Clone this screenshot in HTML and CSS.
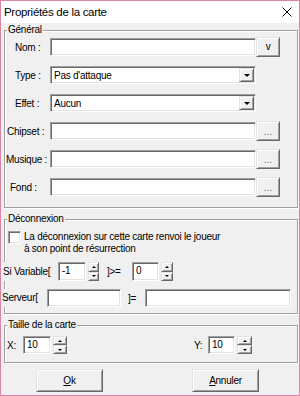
FILE: index.html
```html
<!DOCTYPE html>
<html lang="fr">
<head>
<meta charset="utf-8">
<title>Propriétés de la carte</title>
<link rel="stylesheet" href="styles.css">
</head>
<body>
<div class="window">
  <div class="titlebar">
    <span class="title">Propriétés de la carte</span>
    <svg class="close" width="10" height="10" viewBox="0 0 10 10"><path d="M0.5 0.5L9.5 9.5M9.5 0.5L0.5 9.5" stroke="#000" stroke-width="1" fill="none"/></svg>
  </div>
  <div class="client">
    <div class="group">
      <span class="legend">Général</span>
      <div class="rows">
        <div class="row"><span class="lbl p10">Nom :</span><span class="field w-main"></span><span class="btn sbtn">v</span></div>
        <div class="row"><span class="lbl p10">Type :</span><span class="field combo"><span class="ctext">Pas d'attaque</span><span class="btn dd"><i class="tri-down"></i></span></span></div>
        <div class="row"><span class="lbl p10">Effet :</span><span class="field combo"><span class="ctext">Aucun</span><span class="btn dd"><i class="tri-down"></i></span></span></div>
        <div class="row"><span class="lbl p2">Chipset :</span><span class="field w-main"></span><span class="btn sbtn dots">...</span></div>
        <div class="row"><span class="lbl p1">Musique :</span><span class="field w-main"></span><span class="btn sbtn dots">...</span></div>
        <div class="row"><span class="lbl p5">Fond :</span><span class="field w-main"></span><span class="btn sbtn dots">...</span></div>
      </div>
    </div>

    <div class="group gap-top">
      <span class="legend">Déconnexion</span>
      <div class="chkrow">
        <span class="chk"></span>
        <span class="chktext">La déconnexion sur cette carte renvoi le joueur<br>à son point de résurrection</span>
      </div>
      <div class="svrow">
        <span class="txt sv-lbl">Si Variable[</span>
        <span class="spin">
          <span class="field sp-in w28">-1</span>
          <span class="spbtns w11"><span class="btn spb"><i class="up"></i></span><span class="btn spb"><i class="down"></i></span></span>
        </span>
        <span class="txt ge-lbl">]&gt;=</span>
        <span class="spin">
          <span class="field sp-in w27">0</span>
          <span class="spbtns w12"><span class="btn spb"><i class="up"></i></span><span class="btn spb"><i class="down"></i></span></span>
        </span>
      </div>
      <div class="srvrow">
        <span class="txt srv-lbl">Serveur[</span>
        <span class="field srv-in1"></span>
        <span class="txt eq-lbl">]=</span>
        <span class="field srv-in2"></span>
      </div>
    </div>

    <div class="group gap-top">
      <span class="legend">Taille de la carte</span>
      <div class="sizerow">
        <span class="txt x-lbl">X:</span>
        <span class="spin">
          <span class="field sp-in sz w28">10</span>
          <span class="spbtns sz w14"><span class="btn spb"><i class="up"></i></span><span class="btn spb"><i class="down"></i></span></span>
        </span>
        <span class="txt y-lbl">Y:</span>
        <span class="spin">
          <span class="field sp-in sz w27">10</span>
          <span class="spbtns sz w15"><span class="btn spb"><i class="up"></i></span><span class="btn spb"><i class="down"></i></span></span>
        </span>
      </div>
    </div>

    <div class="actions">
      <span class="btn dlg ok"><u>O</u>k</span>
      <span class="btn dlg cancel"><u>A</u>nnuler</span>
    </div>
  </div>
</div>
</body>
</html>
```
FILE: styles.css
```css
html, body {
  margin: 0;
  padding: 0;
}
body {
  font-family: "Liberation Sans", Arial, sans-serif;
  font-size: 10px;
  letter-spacing: -0.25px;
  color: #000;
  background: #f0f0f0;
}
.window {
  width: 300px;
  height: 396px;
  box-sizing: border-box;
  border: 1px solid #dc84a6;
  background: #f0f0f0;
  display: flex;
  flex-direction: column;
}
.titlebar {
  height: 22px;
  flex: none;
  background: #fff;
  display: flex;
  align-items: center;
  justify-content: space-between;
  padding: 0 7px 0 3px;
}
.title {
  font-size: 11.5px;
  letter-spacing: -0.3px;
  line-height: 14px;
}
.close {
  display: block;
}
.client {
  flex: 1;
  padding: 7px 1px 0 3px;
}

/* group boxes */
.group {
  border: 1px solid #a0a0a0;
  box-shadow: inset 1px 1px 0 #fff, 1px 1px 0 #fff;
}
.gap-top {
  margin-top: 11px;
}
.legend {
  display: block;
  width: max-content;
  height: 12px;
  line-height: 12px;
  margin: -7px 0 0 2px;
  padding: 0 1px;
  background: #f0f0f0;
}

/* sunken fields */
.field {
  display: block;
  box-sizing: border-box;
  height: 18px;
  background: #fff;
  border: 1px solid;
  border-color: #a0a0a0 #fff #fff #a0a0a0;
  box-shadow: inset 1px 1px 0 #696969, inset -1px -1px 0 #e3e3e3;
  flex: none;
}

/* raised buttons */
.btn {
  display: flex;
  align-items: center;
  justify-content: center;
  box-sizing: border-box;
  background: #f0f0f0;
  border: 1px solid;
  border-color: #e3e3e3 #696969 #696969 #e3e3e3;
  box-shadow: inset 1px 1px 0 #fff, inset -1px -1px 0 #a0a0a0;
  flex: none;
}

/* Général rows */
.rows {
  display: flex;
  flex-direction: column;
  gap: 8px;
  padding: 1px 0 10px;
}
.row {
  display: flex;
  align-items: center;
  height: 20px;
}
.lbl {
  width: 45px;
  box-sizing: border-box;
  flex: none;
  white-space: nowrap;
}
.p10 { padding-left: 10px; }
.p5 { padding-left: 5px; }
.p2 { padding-left: 2px; }
.p1 { padding-left: 1px; }
.w-main {
  width: 206px;
}
.sbtn {
  width: 24px;
  height: 20px;
  font-size: 10px;
  line-height: 10px;
  padding-bottom: 1px;
}
.dots {
  color: #6d6d6d;
  letter-spacing: 0;
  padding-bottom: 0;
  padding-top: 1px;
}
.combo {
  width: 206px;
  display: flex;
  align-items: center;
  padding: 1px 1px 1px 2px;
}
.ctext {
  flex: 1;
  padding-left: 1px;
  white-space: nowrap;
}
.dd {
  width: 15px;
  height: 14px;
}
.tri-down {
  display: block;
  width: 0;
  height: 0;
  border-left: 3px solid transparent;
  border-right: 3px solid transparent;
  border-top: 3px solid #000;
  margin-top: 1px;
}

/* Déconnexion */
.chkrow {
  display: flex;
  align-items: flex-start;
  margin-top: 6px;
  padding-left: 3px;
}
.chk {
  display: block;
  width: 13px;
  height: 13px;
  box-sizing: border-box;
  background: #fff;
  border: 1px solid;
  border-color: #a0a0a0 #fff #fff #a0a0a0;
  box-shadow: inset 1px 1px 0 #696969, inset -1px -1px 0 #e3e3e3;
  margin-right: 3px;
  flex: none;
}
.chktext {
  line-height: 12px;
  margin-top: 0;
}
.txt {
  display: block;
  flex: none;
  white-space: nowrap;
  background: #f0f0f0;
}
.svrow {
  display: flex;
  align-items: center;
  height: 19px;
  margin-top: 7px;
}
.sv-lbl {
  width: 55px;
  margin-left: -2px;
  line-height: 19px;
}
.ge-lbl {
  width: 25px;
  margin-left: 8px;
}
.spin {
  display: flex;
  gap: 2px;
  flex: none;
}
.sp-in {
  height: 19px;
  padding-left: 3px;
  line-height: 16px;
}
.sp-in.sz {
  height: 18px;
  line-height: 15px;
}
.w27 { width: 27px; }
.w28 { width: 28px; }
.spbtns {
  display: flex;
  flex-direction: column;
  height: 19px;
}
.spbtns.sz {
  height: 18px;
}
.w11 { width: 11px; }
.w12 { width: 12px; }
.w14 { width: 14px; }
.w15 { width: 15px; }
.spb {
  flex: 1;
  width: 100%;
}
.up, .down {
  display: block;
  width: 0;
  height: 0;
  border-left: 2px solid transparent;
  border-right: 2px solid transparent;
}
.up {
  border-bottom: 2px solid #000;
}
.down {
  border-top: 2px solid #000;
}
.srvrow {
  display: flex;
  align-items: center;
  height: 18px;
  margin-top: 8px;
  padding-bottom: 6px;
}
.srv-lbl {
  width: 45px;
  margin-left: -3px;
  line-height: 18px;
}
.srv-in1 {
  width: 74px;
}
.eq-lbl {
  width: 17px;
  margin-left: 7px;
}
.srv-in2 {
  width: 146px;
}

/* Taille */
.sizerow {
  display: flex;
  align-items: center;
  height: 18px;
  margin-top: 5px;
  padding-bottom: 8px;
}
.x-lbl {
  width: 18px;
  box-sizing: border-box;
  padding-left: 2px;
}
.y-lbl {
  width: 14px;
  margin-left: 127px;
}

/* dialog buttons */
.actions {
  display: flex;
  margin-top: 6px;
}
.dlg {
  width: 67px;
  height: 23px;
  font-size: 10px;
}
.dlg u {
  text-decoration: underline;
  text-underline-offset: 1px;
}
.ok {
  margin-left: 32px;
}
.cancel {
  margin-left: 89px;
}
```
